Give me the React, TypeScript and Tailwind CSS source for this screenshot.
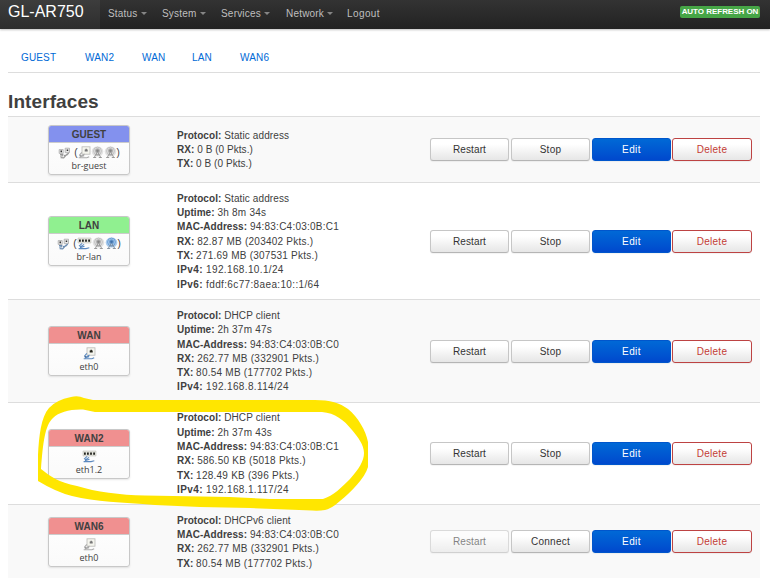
import React from "react";

type Detail = [string, string];
type Row = {
  name: string;
  device: string;
  head: string;
  height: string;
  kind: "guest" | "lan" | "port" | "switch" | "portOff";
  details: Detail[];
  idle?: boolean;
};

const rows: Row[] = [
  {
    name: "GUEST", device: "br-guest", head: "bg-[#8391ee]", height: "h-[66px]", kind: "guest",
    details: [["Protocol", "Static address"], ["RX", "0 B (0 Pkts.)"], ["TX", "0 B (0 Pkts.)"]],
  },
  {
    name: "LAN", device: "br-lan", head: "bg-[#90f090]", height: "h-[117px]", kind: "lan",
    details: [
      ["Protocol", "Static address"], ["Uptime", "3h 8m 34s"], ["MAC-Address", "94:83:C4:03:0B:C1"],
      ["RX", "82.87 MB (203402 Pkts.)"], ["TX", "271.69 MB (307531 Pkts.)"],
      ["IPv4", "192.168.10.1/24"], ["IPv6", "fddf:6c77:8aea:10::1/64"],
    ],
  },
  {
    name: "WAN", device: "eth0", head: "bg-[#f09090]", height: "h-[103px]", kind: "port",
    details: [
      ["Protocol", "DHCP client"], ["Uptime", "2h 37m 47s"], ["MAC-Address", "94:83:C4:03:0B:C0"],
      ["RX", "262.77 MB (332901 Pkts.)"], ["TX", "80.54 MB (177702 Pkts.)"], ["IPv4", "192.168.8.114/24"],
    ],
  },
  {
    name: "WAN2", device: "eth1.2", head: "bg-[#f09090]", height: "h-[102px]", kind: "switch",
    details: [
      ["Protocol", "DHCP client"], ["Uptime", "2h 37m 43s"], ["MAC-Address", "94:83:C4:03:0B:C1"],
      ["RX", "586.50 KB (5018 Pkts.)"], ["TX", "128.49 KB (396 Pkts.)"], ["IPv4", "192.168.1.117/24"],
    ],
  },
  {
    name: "WAN6", device: "eth0", head: "bg-[#f09090]", height: "h-[74px]", kind: "portOff", idle: true,
    details: [
      ["Protocol", "DHCPv6 client"], ["MAC-Address", "94:83:C4:03:0B:C0"],
      ["RX", "262.77 MB (332901 Pkts.)"], ["TX", "80.54 MB (177702 Pkts.)"],
    ],
  },
];

function valueTracking(label: string, value: string) {
  if (label === "IPv4" || label === "IPv6") return "tracking-[0.36px]";
  if (label === "Protocol") return "tracking-[0.12px]";
  if (value.length < 14 && label !== "Uptime") return "tracking-[0.05px]";
  return "tracking-[0.24px]";
}

function PortIcon({ on = false }: { on?: boolean }) {
  return (
    <svg width="13" height="13" viewBox="0 0 13 13" fill="none">
      <rect x="4" y=".8" width="8" height="7.4" fill="#f5f5ee" stroke="#b9b9b6" strokeWidth=".8" />
      <path d="M6.7 5.5V3.4h.8v-.7h1.4v.7h.8v2.1z" fill={on ? "#24241b" : "#777"} />
      <path d="M3.8 6.4 1.7 8.9l1.5 1.2 3.3-2.1M.7 11.8h8.2l2.3-1M2 10.8l4.2-1.2" stroke={on ? "#5b89bf" : "#ababab"} strokeWidth="1.1" />
      <path d="M1.4 9.8h1.8" stroke={on ? "#38567d" : "#8a8a8a"} strokeWidth=".8" />
    </svg>
  );
}

function SwitchIcon() {
  return (
    <svg width="15" height="13" viewBox="0 0 15 13" fill="none">
      <path d="M1 1h13v5H1z" fill="#e3e3dc" stroke="#c4c4be" strokeWidth=".6" />
      <path d="M2 2.6h1.8v2.2H2zM5 2.6h1.8v2.2H5zM8.1 2.6h1.8v2.2H8.1zM11.2 2.6H13v2.2h-1.8z" fill="#22231e" />
      <path d="M5.2 6.4 2.5 8.7l1.2.9L7.1 7.4M1.6 11.6h7.5l3.2-.8M3 10.6l4.5-1.4" stroke="#5b89bf" strokeWidth="1.1" />
    </svg>
  );
}

function BridgeIcon({ on = false }: { on?: boolean }) {
  return (
    <svg width="13" height="12" viewBox="0 0 13 12" fill="none">
      <path d="M1.2 2.6h4v3.8h-4zM7.2 1.2h4.3v4.4H7.2z" fill="#e8e8e8" stroke="#aaa" strokeWidth=".8" />
      <path d="M2.5 3.6h1.5v1.6H2.5zM8.7 2.5h1.5v1.6H8.7z" fill="#333" />
      <path d="M2 7.5h3.4M2.2 9.1l3.1-.5M2.6 10.6l3.1.2 3.8-4.1M6 8.7 8.9 8l1.8-2" stroke={on ? "#6c8cb0" : "#999"} strokeWidth="1.2" />
    </svg>
  );
}

function WifiIcon({ on = false }: { on?: boolean }) {
  return (
    <svg width="13" height="13" viewBox="0 0 13 13" fill="none">
      <ellipse cx="6.5" cy="5.6" rx="5.8" ry="5" fill={on ? "#a9cbee" : "#e2e2e2"} />
      <circle cx="6.5" cy="5" r="3.9" stroke={on ? "#6c9fd4" : "#c2c2c2"} />
      <circle cx="6.5" cy="4.8" r="2.5" fill={on ? "#6f9fd2" : "#b2b2b2"} />
      <circle cx="6.5" cy="4.7" r="1.3" fill={on ? "#3f70a8" : "#858585"} />
      <path d="M6 6.500 3.200 11.500M7 6.500 9.800 11.500M5 8.900h3M2.200 11.500h3M7.800 11.500h3" stroke={on ? "#7f8b98" : "#929292"} strokeWidth=".9" />
    </svg>
  );
}

function DeviceIcons({ kind }: { kind: Row["kind"] }) {
  if (kind === "port" || kind === "portOff") return <PortIcon on={kind === "port"} />;
  if (kind === "switch") return <SwitchIcon />;
  const lan = kind === "lan";
  return (
    <>
      <BridgeIcon on={lan} />
      <span className="ml-[3px]">(</span>
      {lan ? <SwitchIcon /> : <PortIcon />}
      <WifiIcon />
      <WifiIcon on={lan} />
      <span>)</span>
    </>
  );
}

function DeviceBox({ row }: { row: Row }) {
  return (
    <div className="ml-10 h-[50px] w-[82px] shrink-0 overflow-hidden rounded-[3px] border border-[#c8c8c8] bg-gradient-to-b from-white to-[#fafafa] text-center shadow-[0_1px_2px_#0000001a]">
      <div className={`h-[17px] border-b border-[#ccc] text-[10px] leading-[17px] font-bold text-[#404040] ${row.head}`}>{row.name}</div>
      <div className="flex h-[16px] items-end justify-center pt-[2px] text-[10px] leading-[13px]"><DeviceIcons kind={row.kind} /></div>
      <div className="font-['Open_Sans','Noto_Sans',sans-serif] text-[9px] leading-[13px]">{row.device}</div>
    </div>
  );
}

const buttonBase = "flex h-[23px] w-[79px] items-center justify-center rounded-[3px] border text-[10px] shadow-[0_1px_1px_#0000000d]";
const plain = "border-[#c6c6c6] border-b-[#b5b5b5] bg-gradient-to-b from-white from-25% to-[#e6e6e6] text-[#333]";

function Actions({ idle = false }: { idle?: boolean }) {
  return (
    <div className="mr-2 ml-auto flex">
      <button className={`${buttonBase} ${plain} mr-[2px] tracking-[0.1px] ${idle ? "opacity-60" : ""}`}>Restart</button>
      <button className={`${buttonBase} ${plain} mr-[2px] tracking-[0.25px]`}>{idle ? "Connect" : "Stop"}</button>
      <button className={`${buttonBase} mr-px border-[#0056cc] bg-gradient-to-b from-[#0069d6] to-[#0048cd] tracking-[0.4px] text-white`}>Edit</button>
      <button className={`${buttonBase} w-[80px] border-[#bd4343] bg-gradient-to-b from-white from-25% to-[#e6e6e6] tracking-[0.25px] text-[#c43c35]`}>Delete</button>
    </div>
  );
}

function Menu({ label, caret = true, className }: { label: string; caret?: boolean; className: string }) {
  return (
    <a className={`flex shrink-0 items-center ${className}`}>
      {label}
      {caret && <span className="ml-[3px] border-x-[3px] border-t-[3px] border-x-transparent border-t-[#858585]" />}
    </a>
  );
}

export default function App() {
  return (
    <div className="relative h-[583px] w-[770px] overflow-hidden bg-white font-['Liberation_Sans',Arial,sans-serif] text-[#404040]">
      <header className="flex h-[29px] bg-gradient-to-b from-[#333] to-[#222] text-[10px] tracking-[0.2px] text-[#bfbfbf] shadow-[0_1px_2px_#00000040]">
        <div className="w-[100px] bg-white/5 pl-2 text-[16px] leading-[24px] tracking-normal text-white">GL-AR750</div>
        <nav className="flex h-[26px]">
          <Menu label="Status" className="ml-2 w-[54px]" />
          <Menu label="System" className="w-[59px]" />
          <Menu label="Services" className="w-[65px]" />
          <Menu label="Network" className="w-[61px]" />
          <Menu label="Logout" caret={false} className="w-[40px] tracking-[0.4px]" />
        </nav>
        <div className="mt-[6px] mr-[10px] ml-auto h-3 w-[80px] rounded-[2px] bg-[#46a546] text-center text-[8px] leading-[11px] font-bold tracking-[-0.03px] whitespace-nowrap text-white">AUTO REFRESH ON</div>
      </header>
      <main className="mx-auto w-[754px] pr-[2px] pl-0">
        <nav className="flex h-[44px] border-b border-[#ddd] pl-[13px] text-[10px] leading-[57px] tracking-[0.15px] text-[#0069d6]">
          <a className="w-[64px]">GUEST</a>
          <a className="w-[57px]">WAN2</a>
          <a className="w-[50px]">WAN</a>
          <a className="w-[48px]">LAN</a>
          <a>WAN6</a>
        </nav>
        <h2 className="h-[43px] pt-[17px] text-[19px] leading-[24px] font-bold tracking-[0.1px]">Interfaces</h2>
        <section>
          {rows.map((row) => (
            <div key={row.name} className={`flex items-center border-t border-[#ddd] odd:bg-[#f9f9f9] ${row.height}`}>
              <DeviceBox row={row} />
              <div className="ml-[47px] pt-[1.6px] text-[10px] leading-[14.3px] whitespace-nowrap">
                {row.details.map(([label, value]) => (
                  <div key={label}>
                    <strong className={label.startsWith("IP") ? "tracking-[0.4px]" : "tracking-[0.05px]"}>{label}: </strong>
                    <span className={valueTracking(label, value)}>{value}</span>
                  </div>
                ))}
              </div>
              <Actions idle={row.idle} />
            </div>
          ))}
        </section>
      </main>
      <svg className="pointer-events-none absolute inset-0" width="770" height="583" fill="#ffe600">
        <path fillRule="evenodd" d="M38 481V455C39 436 41 417 49 408Q56 400 71 397Q78 395 84 398L93 400H315C330 400 340 403 348 409C358 417 366 431 368 442V467C365 478 351 492 340 501Q331 509 325 510Q319 511 312 510.500L250 508L200 507L155 505C121 502 96 502 72 496Q56 492 38 481ZM41 469C51 477 58 482 77 486C96 492 120 495 145 495.500L230 497L270 499H323C333 496 342 487 350 479C359 469 364 461 364 453C364 445 358 437 352 430C344 420 335 413 322 412H95L83 409.500C70 409 59 412 53 418C45 425 43 443 41 469Z" />
      </svg>
    </div>
  );
}
